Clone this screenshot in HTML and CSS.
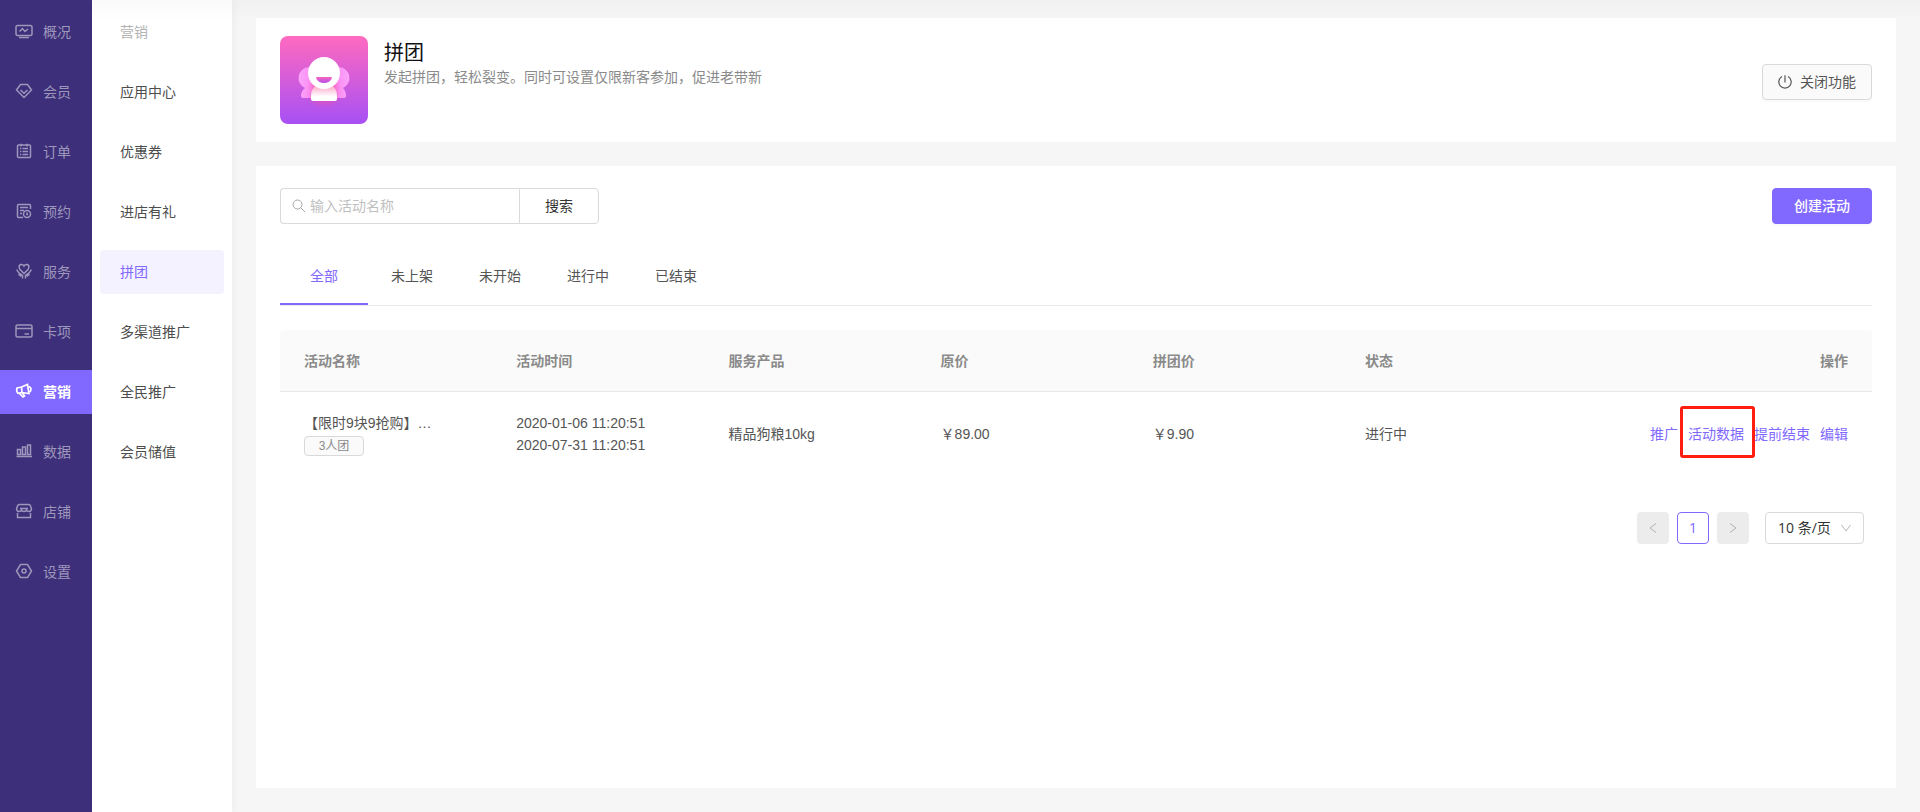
FILE: index.html
```html
<!DOCTYPE html>
<html lang="zh-CN">
<head>
<meta charset="utf-8">
<title>拼团</title>
<link rel="stylesheet" href="styles.css">
</head>
<body>
<div class="app">
  <nav class="sidebar" aria-label="主菜单">
    <a class="side-item" href="#"><svg class="side-icon" viewBox="0 0 18 18"><rect x="1" y="2.5" width="16" height="10" rx="1.5"/><path d="M4.5 8.500 7.500 5.500 10 8.500 13 6M4 14.500H14"/></svg>概况</a>
    <a class="side-item" href="#"><svg class="side-icon" viewBox="0 0 18 18"><path d="M5.500 1.500H12.500L16.500 7 9 14.500 1.500 7ZM5.500 7 9 10.300 12.500 7"/></svg>会员</a>
    <a class="side-item" href="#"><svg class="side-icon" viewBox="0 0 18 18"><rect x="2.500" y="2" width="13" height="12.500" rx="1"/><path d="M6 .8V3.500M12 .8V3.500M5 5.500H6.300M7.500 5.500H13M5 8.500H6.300M7.500 8.500H13M5 11.500H6.300M7.500 11.500H13"/></svg>订单</a>
    <a class="side-item" href="#"><svg class="side-icon" viewBox="0 0 18 18"><path d="M8 14.500H3.500Q2.500 14.500 2.500 13.500V2.500Q2.500 1.500 3.500 1.500H14.500Q15.500 1.500 15.500 2.500V6M5 4.500H13M5 7.500H9M5 10.500H7"/><circle cx="12" cy="11" r="3.500"/><path d="M12 9.500V11.500H13"/></svg>预约</a>
    <a class="side-item" href="#"><svg class="side-icon" viewBox="0 0 18 18"><path d="M9 10.500 5 6.500Q3 3 5.500 1.500 8 1 9 3 10 1 12.500 1.500 15 3 13 6.500ZM2 6.500Q2 9 7.500 12.500V15.500M16 6.500Q16 9 10.500 12.500V15.500M3.500 11 6 13.500M14.500 11 12 13.500"/></svg>服务</a>
    <a class="side-item" href="#"><svg class="side-icon" viewBox="0 0 18 18"><rect x="1" y="2" width="16" height="12" rx="1.500"/><path d="M1 5.500H17M9.500 11H14"/></svg>卡项</a>
    <a class="side-item active" href="#" aria-current="page"><svg class="side-icon bold" viewBox="0 0 18 18"><path d="M2 5 6.500 4 12.500 1.500 14 10.500 7 9.500 3 10.300Q1 8 2 5ZM6.500 4 7 9.500M14 3.500Q17.500 5 15 9M4.500 10.500 8 14 9.500 13 7.500 10"/></svg>营销</a>
    <a class="side-item" href="#"><svg class="side-icon" viewBox="0 0 18 18"><path d="M1.500 13.500H17M2.500 6.500H5.500V11.500H2.500ZM7.500 4H10.500V11.500H7.500ZM12.500 2H15.500V11.500H12.500Z"/></svg>数据</a>
    <a class="side-item" href="#"><svg class="side-icon" viewBox="0 0 18 18"><path d="M4 1.500H14Q15 1.500 15.500 3L16.500 6Q16 8.500 14 8.500 12 8.500 11.500 7 11 8.500 9 8.500 7 8.500 6.500 7 6 8.500 4 8.500 2 8.500 1.500 6L2.500 3Q3 1.500 4 1.500ZM5 5.500H13M2.500 10V14.500H15.500V10"/></svg>店铺</a>
    <a class="side-item" href="#"><svg class="side-icon" viewBox="0 0 18 18"><path d="M5.500 1.500H12.500L16.500 8 12.500 14.500H5.500L1.500 8Z"/><circle cx="9" cy="8" r="2"/></svg>设置</a>
  </nav>

  <nav class="submenu" aria-label="营销">
    <span class="sub-title">营销</span>
    <a class="sub-item" href="#">应用中心</a>
    <a class="sub-item" href="#">优惠券</a>
    <a class="sub-item" href="#">进店有礼</a>
    <a class="sub-item active" href="#" aria-current="page">拼团</a>
    <a class="sub-item" href="#">多渠道推广</a>
    <a class="sub-item" href="#">全民推广</a>
    <a class="sub-item" href="#">会员储值</a>
  </nav>

  <main class="main">
    <header class="card feature">
      <svg class="feature-icon" viewBox="0 0 88 88" aria-hidden="true">
        <defs>
          <linearGradient id="bg" x2="0" y2="1"><stop stop-color="#ff6abf"/><stop offset="1" stop-color="#a750f5"/></linearGradient>
          <linearGradient id="side"><stop stop-color="#fba6fb"/><stop offset=".25" stop-color="#fb8cf3"/><stop offset=".5" stop-color="#fb70c8"/><stop offset=".75" stop-color="#fb8cf3"/><stop offset="1" stop-color="#fba6fb"/></linearGradient>
          <linearGradient id="torso" x2="0" y2="1"><stop stop-color="#ffa9cb"/><stop offset=".7" stop-color="#fff"/></linearGradient>
          <linearGradient id="mouth" x2="0" y2="1"><stop stop-color="#f866bd"/><stop offset="1" stop-color="#b550ec"/></linearGradient>
          <filter id="glow" x="-50%" y="-50%" width="200%" height="200%"><feGaussianBlur stdDeviation="2.5"/></filter>
        </defs>
        <rect width="88" height="88" rx="8" fill="url(#bg)"/>
        <path d="M29 31A11 11 0 0 0 25 52Q21 55 21 60 21 62 23 62H64Q66 62 66 60 66 55 63 52A11 11 0 0 0 59 31Z" fill="url(#side)"/>
        <path d="M31 60V46H57V60Q57 68 44 68 31 68 31 60Z" fill="#f5509f" opacity=".5" filter="url(#glow)"/>
        <path d="M35 50H53Q57 54 57 60V63Q57 65 55 65H33Q31 65 31 63V60Q31 54 35 50Z" fill="url(#torso)"/>
        <circle cx="44" cy="37" r="16" fill="#fff"/>
        <path d="M37 41H51Q52 41 52 42 50 47 44 47 38 47 36 42 36 41 37 41Z" fill="url(#mouth)"/>
      </svg>
      <div class="feature-text">
        <h1 class="feature-title">拼团</h1>
        <p class="feature-desc">发起拼团，轻松裂变。同时可设置仅限新客参加，促进老带新</p>
      </div>
      <button class="btn btn-off" type="button"><svg class="power" viewBox="0 0 14 14"><path d="M4 1.500A6.200 6.200 0 1 0 10 1.500M7 .3V7.500"/></svg>关闭功能</button>
    </header>

    <section class="card panel">
      <div class="toolbar">
        <form class="search">
          <label class="search-box">
            <svg class="search-icon" viewBox="0 0 14 14"><circle cx="5.500" cy="5.500" r="4.500"/><path d="M8.800 8.800 13 13"/></svg>
            <input class="search-input" type="text" placeholder="输入活动名称" aria-label="活动名称">
          </label>
          <button class="search-btn" type="button">搜索</button>
        </form>
        <button class="btn btn-primary" type="button">创建活动</button>
      </div>

      <div class="tabs" role="tablist">
        <button class="tab active" type="button" role="tab" aria-selected="true">全部</button>
        <button class="tab" type="button" role="tab">未上架</button>
        <button class="tab" type="button" role="tab">未开始</button>
        <button class="tab" type="button" role="tab">进行中</button>
        <button class="tab" type="button" role="tab">已结束</button>
      </div>

      <table class="table">
        <thead>
          <tr><th>活动名称</th><th>活动时间</th><th>服务产品</th><th>原价</th><th>拼团价</th><th>状态</th><th class="ops">操作</th></tr>
        </thead>
        <tbody>
          <tr>
            <td><div class="name">【限时9块9抢购】…</div><span class="tag">3人团</span></td>
            <td><div class="date">2020-01-06 11:20:51</div><div class="date">2020-07-31 11:20:51</div></td>
            <td>精品狗粮10kg</td>
            <td>￥89.00</td>
            <td>￥9.90</td>
            <td>进行中</td>
            <td class="ops"><div class="links"><a href="#">推广</a><a class="marked" href="#">活动数据</a><a href="#">提前结束</a><a href="#">编辑</a></div></td>
          </tr>
        </tbody>
      </table>

      <div class="pagination">
        <button class="page" type="button" aria-label="上一页" disabled><svg class="arrow" viewBox="0 0 12 12"><path d="M9 1.500 3 6 9 10.500"/></svg></button>
        <button class="page current" type="button">1</button>
        <button class="page" type="button" aria-label="下一页" disabled><svg class="arrow" viewBox="0 0 12 12"><path d="M3 1.500 9 6 3 10.500"/></svg></button>
        <div class="size">
          <select class="size-select" aria-label="每页条数"><option>10 条/页</option></select>
          <svg class="arrow size-arrow" viewBox="0 0 12 12"><path d="M1.500 3 6 9 10.500 3"/></svg>
        </div>
      </div>
    </section>
  </main>
  <div class="top-shade"></div>
</div>
</body>
</html>
```

FILE: styles.css
```css
* { box-sizing: border-box; }

body {
  margin: 0;
  background: #f6f6f6;
  color: #555;
  font: 14px/22px "Liberation Sans", "Noto Sans CJK SC", sans-serif;
}

a { color: inherit; text-decoration: none; }
button, input, select { font: inherit; color: inherit; }
button { cursor: pointer; }
svg { fill: none; stroke: currentColor; flex: none; }

.app { display: flex; min-height: 100vh; }

.top-shade {
  position: absolute;
  top: 0;
  left: 92px;
  right: 0;
  height: 20px;
  background: linear-gradient(rgba(0, 0, 0, 0.025), rgba(0, 0, 0, 0));
  pointer-events: none;
}

.sidebar {
  display: flex;
  flex-direction: column;
  flex: none;
  gap: 16px;
  width: 92px;
  padding-top: 10px;
  background: #3d2f79;
}
.side-item {
  display: flex;
  align-items: center;
  gap: 10px;
  height: 44px;
  padding-left: 15px;
  color: #9e97bc;
}
.side-item.active { background: #8169ff; color: #fff; font-weight: 700; }
.side-icon { width: 18px; height: 18px; stroke-width: 1.5; }
.side-icon.bold { stroke-width: 1.7; }

.submenu {
  display: flex;
  flex-direction: column;
  flex: none;
  gap: 16px;
  width: 140px;
  padding: 10px 8px;
  background: #fff;
  box-shadow: 2px 0 8px rgba(0, 0, 0, 0.04);
}
.sub-title, .sub-item { height: 44px; padding-left: 20px; line-height: 44px; }
.sub-title { color: #b3b3b3; }
.sub-item { border-radius: 4px; color: #4d4d4d; }
.sub-item.active { background: #f4f2ff; color: #8169ff; }

.main {
  display: flex;
  flex: 1;
  flex-direction: column;
  gap: 24px;
  padding: 18px 24px 24px;
}
.card { background: #fff; }

.feature { display: flex; gap: 16px; padding: 18px 24px; }
.feature-icon { width: 88px; height: 88px; stroke: none; }
.feature-text { flex: 1; padding-top: 2px; }
.feature-title { margin: 0; color: #111; font-size: 20px; font-weight: 400; line-height: 30px; }
.feature-desc { margin: 0; color: #8a8a8a; line-height: 18px; }

.btn {
  display: flex;
  align-items: center;
  justify-content: center;
  height: 36px;
  padding: 0 15px;
  border: 1px solid #d9d9d9;
  border-radius: 4px;
  box-shadow: 0 2px 0 rgba(0, 0, 0, 0.02);
}
.btn-off { gap: 8px; margin-top: 28px; background: #fafafa; }
.btn-primary {
  padding: 0 21px;
  border-color: #8169ff;
  background: #8169ff;
  color: #fff;
  font-weight: 500;
}
.power { width: 14px; height: 14px; stroke-width: 1.2; }

.panel { flex: 1; padding: 22px 24px; }
.toolbar { display: flex; justify-content: space-between; }
.search { display: flex; height: 36px; }
.search-box {
  display: flex;
  align-items: center;
  gap: 4px;
  width: 239px;
  padding: 0 11px;
  border: 1px solid #d9d9d9;
  border-right: 0;
  border-radius: 4px 0 0 4px;
}
.search-icon { width: 14px; height: 14px; color: #a6a6a6; }
.search-input { flex: 1; min-width: 0; padding: 0; border: 0; outline: 0; background: none; }
.search-input::placeholder { color: #bfbfbf; }
.search-btn {
  width: 80px;
  padding: 0;
  border: 1px solid #d9d9d9;
  border-radius: 0 4px 4px 0;
  background: #fff;
  color: #333;
}

.tabs { display: flex; margin: 24px 0; border-bottom: 1px solid #e8e8e8; }
.tab {
  width: 88px;
  height: 57px;
  padding: 0;
  border: 0;
  border-bottom: 2px solid transparent;
  background: none;
}
.tab.active { border-color: #8169ff; color: #8169ff; }

.table { width: 100%; border-spacing: 0; table-layout: fixed; }
.table th, .table td { padding: 0 24px; text-align: left; }
.table th {
  width: 13.33%;
  height: 62px;
  border-bottom: 1px solid #e8e8e8;
  background: #fafafa;
  color: #8a8a8a;
  font-weight: 700;
}
.table th:first-child { border-top-left-radius: 4px; }
.table th:last-child { border-top-right-radius: 4px; }
.table th.ops { width: auto; }
.table td { height: 84px; white-space: nowrap; }
.table .ops { text-align: right; }
.name { height: 24px; }
.date { line-height: 22px; }
.tag {
  display: block;
  width: 60px;
  height: 20px;
  border: 1px solid #d9d9d9;
  border-radius: 4px;
  background: #fafafa;
  color: #8a8a8a;
  font-size: 12px;
  line-height: 18px;
  text-align: center;
}
.links { display: flex; justify-content: flex-end; gap: 10px; color: #8169ff; }
.marked { position: relative; }
.marked::after {
  content: "";
  position: absolute;
  inset: -17px -11px -13px -8px;
  border: 3px solid #ff1e10;
  border-radius: 3px;
}

.pagination {
  display: flex;
  justify-content: flex-end;
  gap: 8px;
  margin: 36px 8px 0 0;
  font-family: "Open Sans", "Noto Sans CJK SC", sans-serif;
}
.page {
  display: flex;
  align-items: center;
  justify-content: center;
  width: 32px;
  height: 32px;
  padding: 0;
  border: 0;
  border-radius: 4px;
  background: #ececec;
  color: #b0b0b0;
}
.page.current { border: 1px solid #8169ff; background: #fff; color: #8169ff; }
.arrow { width: 12px; height: 12px; }
.size { position: relative; margin-left: 8px; }
.size-select {
  width: 99px;
  height: 32px;
  padding: 0 12px;
  border: 1px solid #d9d9d9;
  border-radius: 4px;
  background: #fff;
  color: #333;
  appearance: none;
}
.size-arrow { position: absolute; top: 10px; right: 12px; color: #b8b8b8; pointer-events: none; }
```
